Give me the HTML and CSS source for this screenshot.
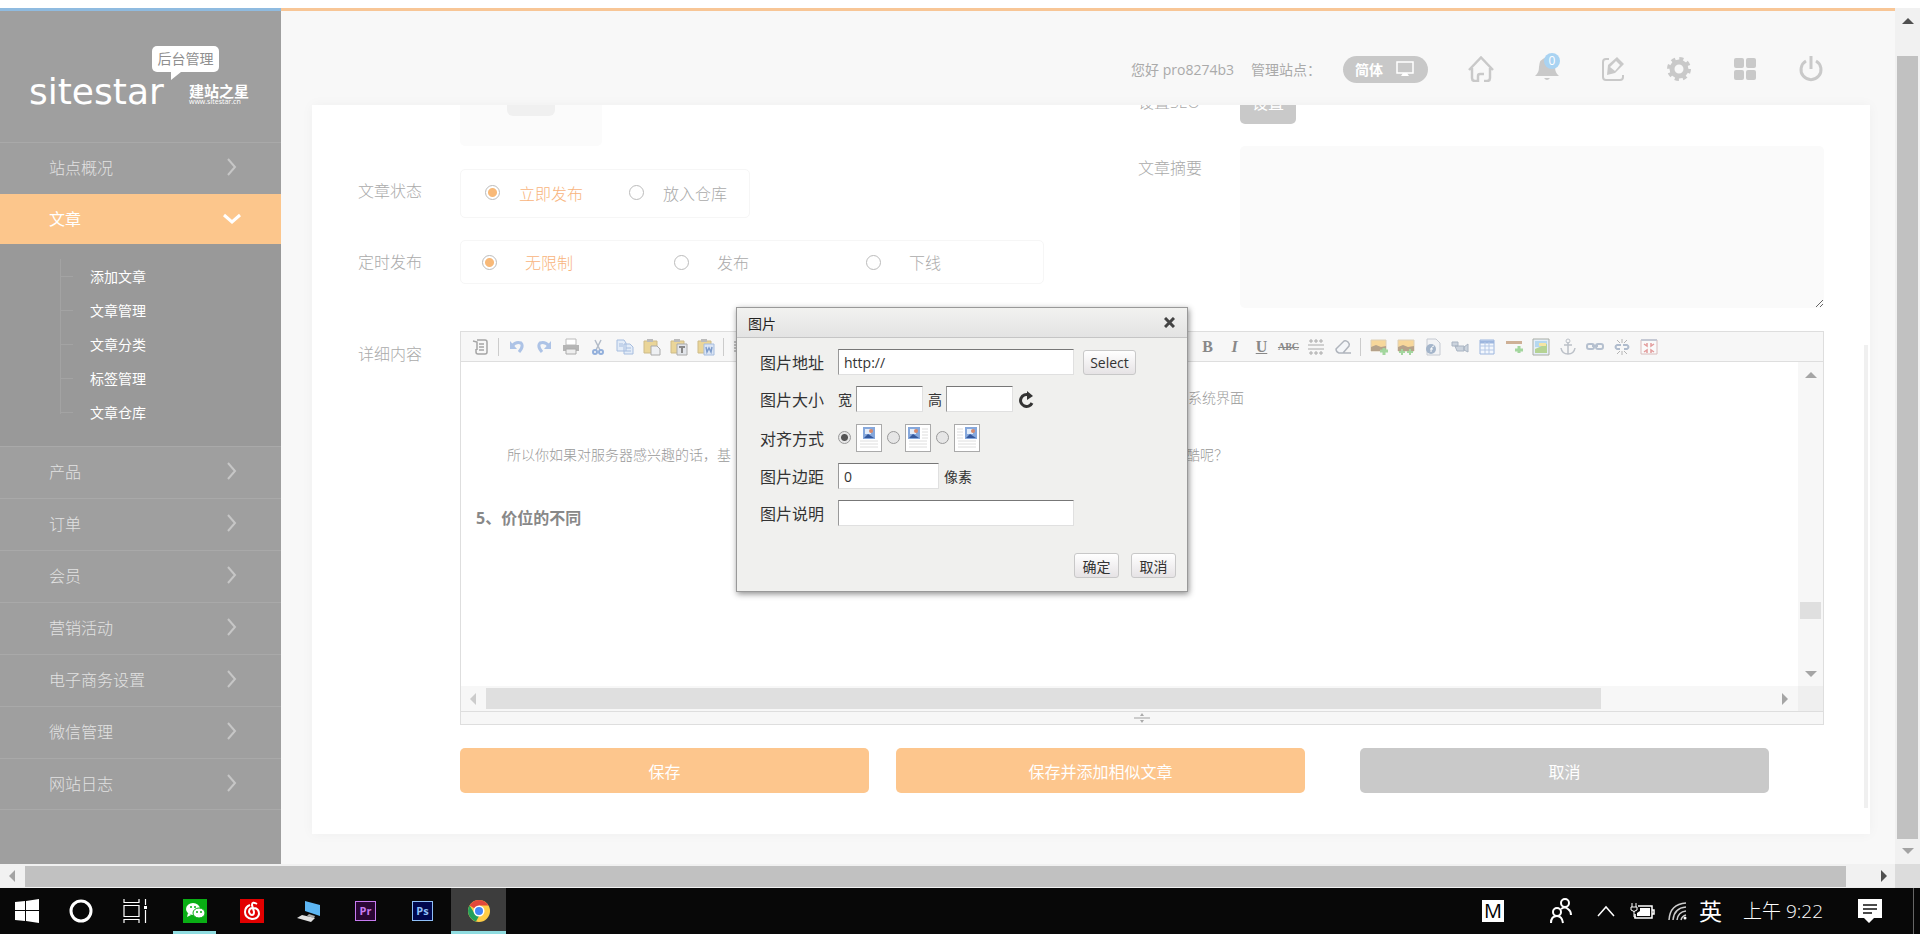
FILE: index.html
```html
<!DOCTYPE html>
<html lang="zh-CN">
<head>
<meta charset="utf-8">
<title>建站之星 后台管理</title>
<link rel="stylesheet" href="styles.css">
</head>
<body>
<div class="browser">
  <div class="viewport">
    <aside class="sidebar">
      <div class="logo">
        <span class="bubble">后台管理</span>
        <div class="brand"><span class="brand-name">sitestar</span><span class="brand-sub"><b>建站之星</b><small>www.sitestar.cn</small></span></div>
      </div>
      <nav>
        <a class="nav-item" href="#">站点概况<svg class="arrow" viewBox="0 0 18 18"><path d="M5 1l7 8-7 8"/></svg></a>
        <a class="nav-item active" href="#">文章<svg class="arrow" viewBox="0 0 18 18"><path d="M1 6l8 7 8-7"/></svg></a>
        <div class="submenu">
          <ul>
            <li><a href="#">添加文章</a></li>
            <li><a href="#">文章管理</a></li>
            <li><a href="#">文章分类</a></li>
            <li><a href="#">标签管理</a></li>
            <li><a href="#">文章仓库</a></li>
          </ul>
        </div>
        <a class="nav-item" href="#">产品<svg class="arrow" viewBox="0 0 18 18"><path d="M5 1l7 8-7 8"/></svg></a>
        <a class="nav-item" href="#">订单<svg class="arrow" viewBox="0 0 18 18"><path d="M5 1l7 8-7 8"/></svg></a>
        <a class="nav-item" href="#">会员<svg class="arrow" viewBox="0 0 18 18"><path d="M5 1l7 8-7 8"/></svg></a>
        <a class="nav-item" href="#">营销活动<svg class="arrow" viewBox="0 0 18 18"><path d="M5 1l7 8-7 8"/></svg></a>
        <a class="nav-item" href="#">电子商务设置<svg class="arrow" viewBox="0 0 18 18"><path d="M5 1l7 8-7 8"/></svg></a>
        <a class="nav-item" href="#">微信管理<svg class="arrow" viewBox="0 0 18 18"><path d="M5 1l7 8-7 8"/></svg></a>
        <a class="nav-item last" href="#">网站日志<svg class="arrow" viewBox="0 0 18 18"><path d="M5 1l7 8-7 8"/></svg></a>
      </nav>
    </aside>
    <main class="main">
      <header class="topbar">
        <span class="hello">您好 pro8274b3</span>
        <span class="site">管理站点：</span>
        <button class="lang" type="button">简体<svg width="18" height="16" viewBox="0 0 18 16"><path d="M1 1h16v11H1z" fill="none" stroke="#fff" stroke-width="1.500"/><path d="M7 12h4l2 3H5z" fill="#fff"/></svg></button>
        <div class="tools">
          <a href="#" aria-label="首页"><svg viewBox="0 0 26 26"><path d="M1 14L13 1.500 25 14M4 12v10q0 3 3 3h3v-5q0-2 2-2h4M22 12v10q0 3-3 3h-3" fill="none" stroke="#c9c9c9" stroke-width="2.500"/></svg></a>
          <a href="#" aria-label="消息"><svg viewBox="0 0 26 26"><path d="M13 1q8 2 8 10 0 6 4 9H1q4-3 4-9 0-8 8-10zM10 22h6q-3 4-6 0z" fill="#c9c9c9"/></svg><span class="badge">0</span></a>
          <a href="#" aria-label="编辑"><svg viewBox="0 0 26 26"><path d="M9 3H6Q3 3 3 6v15q0 3 3 3h14q3 0 3-3v-2" fill="none" stroke="#c9c9c9" stroke-width="2"/><path d="M7 19l1-10 9-8 7 7-9 9zM16 5l4 4-5 6-5-4z" fill="#c9c9c9" fill-rule="evenodd"/></svg></a>
          <a href="#" aria-label="设置"><svg viewBox="0 0 26 26"><circle cx="13" cy="13" r="7" fill="none" stroke="#c9c9c9" stroke-width="5"/><circle cx="13" cy="13" r="10" fill="none" stroke="#c9c9c9" stroke-width="4" stroke-dasharray="4 3.850"/></svg></a>
          <a href="#" aria-label="应用"><svg viewBox="0 0 26 26"><g fill="#c9c9c9"><rect x="2" y="2" width="10" height="10" rx="2"/><rect x="14" y="2" width="10" height="10" rx="2"/><rect x="2" y="14" width="10" height="10" rx="2"/><rect x="14" y="14" width="10" height="10" rx="2"/></g></svg></a>
          <a href="#" aria-label="退出"><svg viewBox="0 0 26 26"><path d="M8 5a10 10 0 1 0 10 0M13 0v13" fill="none" stroke="#c9c9c9" stroke-width="3"/></svg></a>
        </div>
      </header>
      <form class="panel">
        <div class="fields">
          <div class="col">
            <div class="row"><span class="label"></span><div class="upload"><i></i></div></div>
            <div class="row status-row"><span class="label">文章状态</span>
              <div class="options status">
                <label class="on"><input type="radio" name="status" checked>立即发布</label>
                <label><input type="radio" name="status">放入仓库</label>
              </div>
            </div>
            <div class="row timing-row"><span class="label">定时发布</span>
              <div class="options timing">
                <label class="on"><input type="radio" name="timing" checked>无限制</label>
                <label><input type="radio" name="timing">发布</label>
                <label><input type="radio" name="timing">下线</label>
              </div>
            </div>
          </div>
          <div class="col">
            <div class="row seo"><span class="label">设置SEO</span><button type="button" class="seo-btn">设置</button></div>
            <div class="row"><label class="label" for="summary">文章摘要</label><textarea id="summary"></textarea></div>
          </div>
        </div>
        <div class="row content-row">
          <span class="label content-label">详细内容</span>
          <div class="editor">
            <div class="toolbar">
              <button type="button" aria-label="源代码"><svg viewBox="0 0 18 18"><path d="M5 2h8q2 0 2 2v10q0 2-2 2H6q-2 0-2-2v-3M1 3l4 1v8M7 6h5M7 9h5M7 12h5" fill="none" stroke="#a5a5a5" stroke-width="1.500"/></svg></button>
              <i class="sep"></i>
              <button type="button" aria-label="撤销"><svg viewBox="0 0 18 18"><path d="M4 8q4-5 9-3 3 3-2 9" fill="none" stroke="#adc3e6" stroke-width="3"/><path d="M2 3v8h7z" fill="#adc3e6"/></svg></button>
              <button type="button" aria-label="重做"><svg viewBox="0 0 18 18"><path d="M14 8Q10 3 5 5q-3 3 2 9" fill="none" stroke="#adc3e6" stroke-width="3"/><path d="M16 3v8H9z" fill="#adc3e6"/></svg></button>
              <button type="button" aria-label="打印"><svg viewBox="0 0 18 18"><path d="M4 1h10v6H4z" fill="#fff" stroke="#bbb"/><path d="M1 7h16v6H1z" fill="#b5b5b5"/><path d="M4 11h10v5H4z" fill="#eee" stroke="#aaa"/></svg></button>
              <button type="button" aria-label="剪切"><svg viewBox="0 0 18 18"><path d="M6 2l5 10M12 2L7 12" stroke="#b3bcc9" stroke-width="1.500"/><circle cx="6" cy="14" r="2" fill="none" stroke="#92afdb" stroke-width="2"/><circle cx="12" cy="14" r="2" fill="none" stroke="#92afdb" stroke-width="2"/></svg></button>
              <button type="button" aria-label="复制"><svg viewBox="0 0 18 18"><path d="M1 2h7l2 3v8H1zM8 6h6l3 3v7H8z" fill="#e3ecf8" stroke="#a6bddf"/><path d="M3 6h4M3 8h4M10 10h5M10 13h5" stroke="#a6bddf"/></svg></button>
              <button type="button" aria-label="粘贴"><svg viewBox="0 0 18 18"><path d="M1 3h13v12H1z" fill="#ead598" stroke="#cdbb89"/><path d="M4 1h6v3H4z" fill="#bbb"/><path d="M8 8h6l3 3v6H8z" fill="#eef0f3" stroke="#aaa"/></svg></button>
              <button type="button" aria-label="粘贴为文本"><svg viewBox="0 0 18 18"><path d="M1 3h13v12H1z" fill="#ead598" stroke="#cdbb89"/><path d="M4 1h6v3H4z" fill="#bbb"/><path d="M7 6h10v11H7z" fill="#e2e5ea" stroke="#aaa"/><path d="M9 9h6M12 9v6" stroke="#888" stroke-width="2"/></svg></button>
              <button type="button" aria-label="从Word粘贴"><svg viewBox="0 0 18 18"><path d="M1 3h13v12H1z" fill="#ead598" stroke="#cdbb89"/><path d="M4 1h6v3H4z" fill="#bbb"/><path d="M7 6h10v11H7z" fill="#dbe5f4" stroke="#a6bddf"/><path d="M9 9l1 5 2-4 2 4 1-5" fill="none" stroke="#7f9dcc" stroke-width="1.500"/></svg></button>
              <i class="sep"></i>
              <button type="button" aria-label="左对齐"><svg viewBox="0 0 18 18"><path d="M1 4h14M1 7h10M1 10h14M1 13h10" stroke="#8a8a8a"/></svg></button>
              <span class="gap"></span>
              <button type="button" class="txt"><b>B</b></button>
              <button type="button" class="txt"><em>I</em></button>
              <button type="button" class="txt"><u>U</u></button>
              <button type="button" class="txt tiny"><s>ABC</s></button>
              <button type="button" aria-label="行距"><svg viewBox="0 0 18 18"><path d="M1 7h16M1 11h16M4 1v4M9 1v4M14 1v4M4 13v4M9 13v4M14 13v4M2 3h4M7 3h4M12 3h4M2 15h4M7 15h4M12 15h4" stroke="#aaa"/></svg></button>
              <button type="button" aria-label="清除格式"><svg viewBox="0 0 18 18"><path d="M2 11l8-8q2-1 4 1t1 4l-6 7H5q-3-1-3-4zM8 15h9" fill="#f4f6f9" stroke="#b0b5bd" stroke-width="1.500"/></svg></button>
              <i class="sep"></i>
              <button type="button" aria-label="图片"><svg viewBox="0 0 18 18"><path d="M1 2h15v11H1z" fill="#f7d79a" stroke="#ddd0b8"/><path d="M1 9l5-2 5 2 5-1v5H1z" fill="#b5a28a"/><path d="M14 10v7M10 13h8" stroke="#a3d69e" stroke-width="3"/></svg></button>
              <button type="button" aria-label="批量图片"><svg viewBox="0 0 18 18"><path d="M1 2h16v11H1z" fill="#f7d79a" stroke="#ddd0b8"/><path d="M1 9l5-2 5 2 6-1v5H1z" fill="#b5a28a"/><path d="M5 11v6M2 14h6M13 11v6M10 14h6" stroke="#a3d69e" stroke-width="2"/></svg></button>
              <button type="button" aria-label="Flash"><svg viewBox="0 0 18 18"><path d="M3 1h9l4 4v12H3z" fill="#f2f3f5" stroke="#c5cad2"/><circle cx="7" cy="11" r="5" fill="#a4b5ca"/><path d="M10 8q-3 0-3 6M6 11h3" stroke="#fff" fill="none"/></svg></button>
              <button type="button" aria-label="视频"><svg viewBox="0 0 18 18"><path d="M1 4h6v4H1zM4 8h9v5H6zM13 9l4-3v8l-4-2z" fill="#cbd3dd" stroke="#a9b4c2"/></svg></button>
              <button type="button" aria-label="表格"><svg viewBox="0 0 18 18"><path d="M2 2h14v14H2z" fill="#f3f7fd" stroke="#9db6de"/><path d="M2 4h14" stroke="#9db6de" stroke-width="3"/><path d="M2 8h14M2 12h14M7 4v12M11 4v12" stroke="#b5c8e6"/></svg></button>
              <button type="button" aria-label="横线"><svg viewBox="0 0 18 18"><path d="M1 3h16v3H1z" fill="#ceb096"/><path d="M14 8v7M10 12h8" stroke="#a3d69e" stroke-width="3"/></svg></button>
              <button type="button" aria-label="地图"><svg viewBox="0 0 18 18"><path d="M1 1h16v16H1z" fill="#e5eef8" stroke="#a9ada5"/><path d="M3 3h12v6H3z" fill="#b5d8f0"/><path d="M3 11l7-3 5-2v9H3z" fill="#b5d394"/><path d="M7 5h7v3H7z" fill="#f5e5a4"/></svg></button>
              <button type="button" aria-label="锚点"><svg viewBox="0 0 18 18"><path d="M9 4v12M5 7h8M2 10q1 6 7 6 6 0 7-6" fill="none" stroke="#bcc1c8" stroke-width="1.500"/><circle cx="9" cy="3" r="2" fill="none" stroke="#bcc1c8"/></svg></button>
              <button type="button" aria-label="链接"><svg viewBox="0 0 18 18"><rect x="1" y="6" width="7" height="5" rx="2" fill="none" stroke="#b5c0cf" stroke-width="2"/><rect x="10" y="6" width="7" height="5" rx="2" fill="none" stroke="#b5c0cf" stroke-width="2"/><path d="M6 8h6" stroke="#b5c0cf" stroke-width="2"/></svg></button>
              <button type="button" aria-label="取消链接"><svg viewBox="0 0 18 18"><path d="M8 7H4q-3 2 0 4h3M10 7h4q3 2 0 4h-3" fill="none" stroke="#b0bccd" stroke-width="2"/><path d="M9 1v4M9 13v4M4 2l3 3M14 2l-3 3M4 16l3-3M14 16l-3-3" stroke="#b5b5b5"/></svg></button>
              <button type="button" aria-label="全屏"><svg viewBox="0 0 18 18"><path d="M1 2h16v14H1z" fill="#fafafa" stroke="#d9bcbc"/><path d="M1 2h16" stroke="#c5c9d4" stroke-width="2"/><path d="M4 6l3 2V5M14 6l-3 2V5M4 14l3-2v3M14 14l-3-2v3" fill="none" stroke="#e39c9c" stroke-width="1.500"/></svg></button>
            </div>
            <div class="edit-area">
              <div class="document">
                <p class="line-a">系统界面</p>
                <p class="line-b"><span>所以你如果对服务器感兴趣的话，基</span><span>酷呢？</span></p>
                <h4>5、价位的不同</h4>
              </div>
              <div class="vbar"><i class="tri up"></i><i class="thumb"></i><i class="tri down"></i></div>
              <div class="hbar"><i class="tri left"></i><i class="thumb"></i><i class="tri right"></i></div>
              <div class="corner"></div>
            </div>
            <div class="grip"><svg width="18" height="10" viewBox="0 0 18 10"><path d="M1 5h16" stroke="#ccc" stroke-width="2"/><path d="M7 3l2-3 2 3zM7 7l2 3 2-3z" fill="#aaa"/></svg></div>
          </div>
        </div>
        <div class="actions">
          <button type="button">保存</button>
          <button type="button">保存并添加相似文章</button>
          <button type="button" class="cancel">取消</button>
        </div>
        <i class="panel-bar"></i>
      </form>
    </main>
  </div>
  <div class="page-vbar"><i class="tri up"></i><i class="thumb"></i><i class="tri down"></i></div>
  <div class="page-hbar"><i class="tri left"></i><i class="thumb"></i><i class="tri right"></i></div>
  <div class="page-corner"></div>

  <div class="dialog" role="dialog" aria-label="图片">
    <div class="dialog-head"><span>图片</span><button type="button" class="close" aria-label="关闭"><svg width="11" height="11" viewBox="0 0 11 11"><path d="M1 1l9 9M10 1l-9 9" stroke="#444" stroke-width="3"/></svg></button></div>
    <div class="dialog-body">
      <div class="drow"><label class="dlabel" for="url">图片地址</label><input id="url" class="wide" type="text" value="http://"><button type="button" class="dbtn select">Select</button></div>
      <div class="drow"><span class="dlabel">图片大小</span><label for="w">宽</label><input id="w" class="size" type="text"><label for="h">高</label><input id="h" class="size" type="text"><button type="button" class="refresh" aria-label="重置"><svg width="16" height="17" viewBox="0 0 16 17"><path d="M14 12a6 6 0 1 1-3-8" fill="none" stroke="#333" stroke-width="3"/><path d="M9 0l6 5-6 4z" fill="#333"/></svg></button></div>
      <div class="drow align"><span class="dlabel">对齐方式</span>
        <input type="radio" name="al" id="al1" checked><label for="al1" class="thumbnail"><svg width="24" height="26" viewBox="0 0 24 26"><path d="M3 16h18M3 19h18M3 22h18" stroke="#dedede"/><path d="M6 2h12v12H6z" fill="#86a8dc"/><path d="M8 4h6v5H8z" fill="#e3edfa"/><circle cx="14" cy="6" r="2" fill="#d98a6c"/><path d="M7 13l4-4 6 4z" fill="#35599d"/></svg></label>
        <input type="radio" name="al" id="al2"><label for="al2" class="thumbnail"><svg width="24" height="26" viewBox="0 0 24 26"><path d="M16 4h6M16 7h6M16 10h6M16 13h6M3 16h18M3 19h18M3 22h18" stroke="#dedede"/><path d="M2 2h12v12H2z" fill="#86a8dc"/><path d="M4 4h6v5H4z" fill="#e3edfa"/><circle cx="10" cy="6" r="2" fill="#d98a6c"/><path d="M3 13l4-4 6 4z" fill="#35599d"/></svg></label>
        <input type="radio" name="al" id="al3"><label for="al3" class="thumbnail"><svg width="24" height="26" viewBox="0 0 24 26"><path d="M2 4h6M2 7h6M2 10h6M2 13h6M3 16h18M3 19h18M3 22h18" stroke="#dedede"/><path d="M10 2h12v12H10z" fill="#86a8dc"/><path d="M12 4h6v5h-6z" fill="#e3edfa"/><circle cx="18" cy="6" r="2" fill="#d98a6c"/><path d="M11 13l4-4 6 4z" fill="#35599d"/></svg></label>
      </div>
      <div class="drow"><label class="dlabel" for="margin">图片边距</label><input id="margin" class="mid" type="text" value="0"><span>像素</span></div>
      <div class="drow"><label class="dlabel" for="alt">图片说明</label><input id="alt" class="wide" type="text"></div>
    </div>
    <div class="dialog-foot"><button type="button" class="dbtn">确定</button><button type="button" class="dbtn">取消</button></div>
  </div>
</div>

<footer class="taskbar">
  <div class="apps">
    <button type="button" aria-label="开始"><svg viewBox="0 0 24 24"><path d="M0 3l10-1v9H0zM11 2l13-2v11H11zM0 12h10v10L0 21zM11 12h13v12l-13-2z" fill="#fff"/></svg></button>
    <button type="button" aria-label="Cortana"><svg viewBox="0 0 24 24"><circle cx="12" cy="12" r="10" fill="none" stroke="#fff" stroke-width="3"/></svg></button>
    <button type="button" aria-label="任务视图"><svg viewBox="0 0 24 24"><path d="M1 6.500h15v11H1zM1 0v3.500h15V0M1 24v-3.500h15V24M22.500 0v6M22.500 11v13" fill="none" stroke="#fff" stroke-width="1.200"/><path d="M21 7h3v3h-3z" fill="#fff"/></svg></button>
    <button type="button" class="app running" aria-label="微信"><svg viewBox="0 0 24 24"><path d="M0 0h24v24H0z" fill="#09ae14"/><ellipse cx="10" cy="10" rx="7" ry="6" fill="#fff"/><path d="M5 14l-1 4 4-2z" fill="#fff"/><ellipse cx="16" cy="14" rx="6" ry="5" fill="#fff" stroke="#09ae14"/><g fill="#09ae14"><circle cx="8" cy="8" r="1"/><circle cx="12" cy="8" r="1"/><circle cx="14" cy="13" r="1"/><circle cx="18" cy="13" r="1"/></g></svg></button>
    <button type="button" class="app" aria-label="网易云音乐"><svg viewBox="0 0 24 24"><path d="M0 0h24v24H0z" fill="#e20000"/><path d="M17 5q-5-3-5 1l2 7q0 3-2 3t-3-3q0-4 4-4 6 0 6 6-1 5-7 5-7-1-7-7 0-5 5-7" fill="none" stroke="#fff" stroke-width="2"/></svg></button>
    <button type="button" class="app" aria-label="远程桌面"><svg viewBox="0 0 24 24"><path d="M8 2l15 4v11L8 12z" fill="#5db6f3"/><path d="M12 15l6 2-1 2-7-2z" fill="#aaa"/><path d="M5 16l13 3-4 4L0 19z" fill="#e1e1e1"/></svg></button>
    <button type="button" class="app" aria-label="Premiere"><span class="adobe pr">Pr</span></button>
    <button type="button" class="app" aria-label="Photoshop"><span class="adobe ps">Ps</span></button>
    <button type="button" class="app running current" aria-label="Chrome"><svg viewBox="0 0 24 24"><circle cx="12" cy="12" r="11" fill="#ffcd46"/><path d="M12 12L2.500 6.500A11 11 0 0 1 21.500 6.500H12z" fill="#e2493b"/><path d="M2.500 6.500L8 15l4 2-3 5.500A11 11 0 0 1 2.500 6.500z" fill="#22a05b"/><circle cx="12" cy="12" r="5.500" fill="#fff"/><circle cx="12" cy="12" r="4" fill="#4286f5"/></svg></button>
  </div>
  <div class="tray">
    <span class="ime">M</span>
    <svg class="people" width="24" height="26" viewBox="0 0 24 26"><g fill="none" stroke="#fff" stroke-width="2"><circle cx="8" cy="14" r="4"/><path d="M2 25q0-7 6-7 5 0 6 7"/><circle cx="16" cy="5" r="4"/><path d="M12 11q4-3 7 0 3 2 3 6"/></g></svg>
    <svg class="chev" width="18" height="12" viewBox="0 0 18 12"><path d="M1 11l8-9 8 9" fill="none" stroke="#fff" stroke-width="1.500"/></svg>
    <svg class="batt" width="25" height="18" viewBox="0 0 25 18"><path d="M8 4h14v12H5v-4M22 8h2v4h-2" fill="none" stroke="#fff" stroke-width="1.500"/><path d="M10 6h10v8H7v-3l3-2z" fill="#fff"/><path d="M2 1v4M6 1v4M1 5h6v3q-3 3-6 0zM4 9v6h2" stroke="#fff" fill="none"/></svg>
    <svg class="wifi" width="20" height="20" viewBox="0 0 20 20"><g fill="none" stroke="#ccc" stroke-width="1.500"><path d="M2 19Q3 3 19 2M6 19Q7 7 19 6M10 19q1-8 9-9M14 19q1-4 5-5"/></g><circle cx="18" cy="17" r="1.500" fill="#fff"/></svg>
    <span class="lang-ind">英</span>
    <time>上午 9:22</time>
    <svg class="note" width="24" height="25" viewBox="0 0 24 25"><path d="M0 0h24v19h-8l-5 5-5-5H0z" fill="#fff"/><path d="M5 6h14M5 10h14M5 14h9" stroke="#111" stroke-width="1.500"/></svg>
  </div>
</footer>
</body>
</html>
```
FILE: styles.css
```css
* { box-sizing: border-box; }
body {
  margin: 0;
  min-height: 100vh;
  display: flex;
  flex-direction: column;
  background: #fff;
  font-family: "Open Sans", "Noto Sans CJK SC", sans-serif;
  font-size: 14px;
  color: #aaa;
}
button, input, textarea { font: inherit; color: inherit; margin: 0; }
button { padding: 0; border: 0; background: none; }
a { color: inherit; text-decoration: none; }
p, h4, ul { margin: 0; padding: 0; list-style: none; }

.browser {
  position: relative;
  flex: 1;
  display: grid;
  grid-template-columns: 1fr 25px;
  grid-template-rows: 1fr 24px;
  padding-top: 8px;
}
.viewport { display: flex; background: #f8f8f8; min-width: 0; }

/* Sidebar */
.sidebar {
  width: 281px;
  flex: none;
  border-top: 3px solid #8fbbe0;
  background: #9f9f9f;
  color: #e2e2e2;
}
.logo { height: 131px; padding: 35px 0 0 29px; color: #fff; }
.bubble {
  position: relative;
  display: block;
  width: 67px;
  height: 26px;
  margin-left: 123px;
  border-radius: 5px;
  background: #fff;
  color: #8f8f8f;
  font-size: 14px;
  line-height: 25px;
  text-align: center;
}
.bubble::after {
  content: "";
  position: absolute;
  left: 19px;
  top: 26px;
  border-top: 8px solid #fff;
  border-right: 10px solid transparent;
}
.brand { display: flex; align-items: flex-end; justify-content: space-between; width: 220px; height: 34px; }
.brand-name { font-family: "DejaVu Sans", sans-serif; font-size: 36px; line-height: 28px; }
.brand-sub { display: flex; flex-direction: column; width: 60px; }
.brand-sub b { font-size: 15px; line-height: 14px; }
.brand-sub small { font-size: 7px; line-height: 8px; }

.nav-item {
  display: flex;
  align-items: center;
  justify-content: space-between;
  height: 52px;
  padding: 0 40px 3px 49px;
  border-top: 1px solid #a9a9a9;
  font-size: 16px;
  font-weight: 300;
}
.nav-item.last { border-bottom: 1px solid #a9a9a9; }
.arrow { width: 18px; height: 18px; fill: none; stroke: #c6c6c6; stroke-width: 2; }
.nav-item.active { height: 50px; border: 0; background: #fcc68c; color: #fff; font-weight: 400; }
.nav-item.active .arrow { stroke: #fff; stroke-width: 3; }
.submenu { height: 202px; padding: 15px 0 0 60px; background: #999; color: #fff; }
.submenu ul { height: 155px; border-left: 1px solid #a3a3a3; }
.submenu li { display: flex; align-items: center; height: 34px; }
.submenu li::before { content: ""; width: 12px; margin-right: 17px; border-top: 1px solid #a3a3a3; }

/* Main */
.main {
  flex: 1;
  min-width: 0;
  display: flex;
  flex-direction: column;
  border-top: 3px solid #f8c696;
  padding: 0 25px 30px 31px;
}
.topbar { display: flex; align-items: center; justify-content: flex-end; height: 94px; padding: 22px 46px 0 0; flex: none; }
.hello { margin-right: 17px; }
.site { margin-right: 22px; }
.lang {
  display: flex;
  align-items: center;
  justify-content: space-between;
  width: 85px;
  height: 27px;
  padding: 0 14px 0 12px;
  margin-right: 40px;
  border-radius: 14px;
  background: #c8c8c8;
  color: #fff;
  font-weight: 700;
}
.tools { display: flex; gap: 40px; }
.tools a { position: relative; width: 26px; height: 26px; }
.tools svg { width: 26px; height: 26px; display: block; }
.badge {
  position: absolute;
  left: 10px;
  top: -3px;
  width: 16px;
  height: 16px;
  border-radius: 8px;
  background: #a9d3f2;
  color: #fff;
  font-size: 12px;
  line-height: 16px;
  text-align: center;
}

.panel {
  position: relative;
  flex: 1;
  display: flex;
  flex-direction: column;
  padding: 0 46px 41px;
  background: #fff;
  box-shadow: 0 0 12px rgba(0, 0, 0, .04);
  overflow: hidden;
}
.panel-bar { position: absolute; right: 2px; top: 240px; bottom: 26px; width: 4px; background: #f0f0f0; }
.fields { display: grid; grid-template-columns: minmax(0, 1fr) minmax(0, 1fr); column-gap: 94px; }
.row { display: flex; }
.label { width: 102px; flex: none; font-size: 16px; font-weight: 300; line-height: 44px; }
.upload { width: 142px; height: 41px; border-radius: 0 0 5px 5px; background: #fbfbfb; }
.upload i { display: block; width: 48px; height: 11px; margin: 0 auto; border-radius: 0 0 6px 6px; background: #f0f0f0; }
.status-row { margin-top: 23px; }
.timing-row { margin-top: 22px; }
.options { display: flex; align-items: center; border: 1px solid #f6f6f6; border-radius: 5px; font-size: 16px; font-weight: 300; }
.options label { display: flex; align-items: center; white-space: nowrap; }
.options .on { color: #f8b47c; }
.status { width: 290px; height: 49px; padding: 0 0 2px 24px; gap: 46px; }
.status label { gap: 19px; }
.timing { flex: 1; min-width: 0; height: 44px; padding-left: 21px; }
.timing label { flex: 0 1 192px; gap: 28px; }
.timing label:last-child { flex-basis: auto; }
input[type="radio"] {
  appearance: none;
  width: 15px;
  height: 15px;
  flex: none;
  border: 1px solid #bbb;
  border-radius: 50%;
  background: #fff;
}
.options input:checked { background: radial-gradient(circle, #f8b978 4px, #fff 5px); }
.seo { height: 19px; margin-bottom: 22px; align-items: flex-end; }
.seo .label { line-height: 43px; }
.seo-btn { width: 56px; height: 44px; border-radius: 5px; background: #c9c9c9; color: #fff; font-size: 16px; }
textarea { flex: 1; min-width: 0; height: 162px; border: 0; border-radius: 5px; background: #fafafa; }

.content-row { flex: 1; margin-top: 23px; }
.content-label { line-height: 46px; }
.editor { flex: 1; min-width: 0; display: flex; flex-direction: column; border: 1px solid #dedede; }
.toolbar { display: flex; align-items: center; height: 30px; padding-left: 6px; border-bottom: 1px solid #dedede; background: #f7f7f7; }
.toolbar button { width: 27px; height: 28px; flex: none; display: flex; align-items: center; justify-content: center; }
.toolbar svg { width: 18px; height: 18px; fill: none; }
.toolbar .sep { width: 1px; height: 18px; margin: 0 4px; flex: none; background: #ccc; }
.toolbar .gap { width: 439px; flex: none; }
.toolbar .txt { font-family: "Liberation Serif", serif; font-size: 16px; font-weight: 700; color: #888; }
.toolbar .tiny { font-size: 10px; }
.edit-area { flex: 1; display: grid; grid-template-columns: 1fr 25px; grid-template-rows: 1fr 25px; }
.document { padding: 24px 0 0 15px; color: #999; font-weight: 300; line-height: 24px; }
.line-a { width: 768px; text-align: right; }
.line-b { display: flex; justify-content: space-between; width: 752px; margin-top: 33px; padding-left: 31px; }
.document h4 { margin-top: 39px; font-size: 16px; font-weight: 700; color: #888; }
.vbar, .hbar, .page-vbar, .page-hbar { display: flex; align-items: center; }
.vbar, .page-vbar { flex-direction: column; }
.vbar, .hbar { background: #f7f7f7; color: #a5a5a5; }
.thumb { background: #dfdfdf; }
.vbar { padding: 10px 0 9px; }
.vbar .thumb { width: 21px; height: 17px; margin-top: auto; margin-bottom: 52px; }
.hbar { padding: 0 10px 0 9px; }
.hbar .thumb { height: 21px; flex: 1; margin: 0 181px 0 10px; }
.hbar .left { color: #ccc; }
.corner { background: #efefef; }
.tri { width: 0; height: 0; flex: none; border: 6px solid transparent; }
.tri.up { border-top: 0; border-bottom-color: currentColor; }
.tri.down { border-bottom: 0; border-top-color: currentColor; }
.tri.left { border-left: 0; border-right-color: currentColor; }
.tri.right { border-right: 0; border-left-color: currentColor; }
.grip { display: flex; align-items: center; justify-content: center; height: 13px; border-top: 1px solid #dedede; background: #f7f7f7; }

.actions { display: flex; gap: 27px; margin: 23px 55px 0 102px; }
.actions button { flex: 1; height: 45px; border-radius: 5px; background: #fdc68d; color: #fff; font-size: 16px; }
.actions .cancel { margin-left: 28px; background: #c9c9c9; }

/* Page scrollbars */
.page-vbar, .page-hbar { background: #f1f1f1; color: #505050; }
.page-vbar { padding: 10px 0; }
.page-vbar .thumb { width: 21px; flex: 1; margin: 32px 0 9px; background: #c1c1c1; }
.page-vbar .down, .page-hbar .left { color: #a3a3a3; }
.page-hbar { padding: 0 8px 0 9px; }
.page-hbar .thumb { height: 21px; flex: 1; margin: 0 35px 0 10px; background: #c1c1c1; }
.page-corner { background: #dcdcdc; }

/* Image dialog */
.dialog {
  position: absolute;
  left: calc(50% - 224px);
  top: 307px;
  width: 452px;
  border: 1px solid #999;
  background: #f0f0ee;
  box-shadow: 1px 2px 6px rgba(0, 0, 0, .45);
  color: #333;
}
.dialog-head {
  display: flex;
  align-items: center;
  justify-content: space-between;
  height: 30px;
  padding: 0 12px 0 11px;
  border-bottom: 1px solid #c5c5c5;
  background: linear-gradient(#f2f2f0, #e3e3e3);
  color: #222;
}
.close { display: flex; }
.dialog-body { display: flex; flex-direction: column; gap: 11px; padding: 11px 0 0 23px; }
.drow { display: flex; align-items: center; height: 26px; }
.drow.align { height: 29px; }
.dlabel { width: 78px; flex: none; font-size: 16px; }
.dialog input[type="text"] {
  height: 26px;
  padding: 0 5px;
  border: 1px solid #e0e0e0;
  border-top-color: #777;
  border-left-color: #999;
  background: #fff;
}
.dialog .wide { width: 236px; }
.dialog .size { width: 67px; margin: 0 5px 0 4px; }
.dialog .mid { width: 101px; margin-right: 5px; }
.refresh { display: flex; }
.dialog input[type="radio"] { width: 13px; height: 13px; border-color: #999; background: #e6e6e6; }
.dialog input[type="radio"]:checked { background: radial-gradient(circle, #555 3px, #e6e6e6 4px); }
.thumbnail { display: flex; width: 26px; height: 28px; margin: 0 5px; border: 1px solid #aaa; background: #fff; }
.dbtn {
  width: 45px;
  height: 25px;
  border: 1px solid #c8c8c8;
  border-radius: 3px;
  background: linear-gradient(#fff, #e6e3e5);
  color: #333;
}
.select { width: 53px; margin-left: 9px; }
.dialog-foot { display: flex; justify-content: flex-end; gap: 12px; padding: 27px 11px 13px 0; }

/* Taskbar */
.taskbar { display: flex; justify-content: space-between; height: 46px; background: #080808; color: #fff; }
.apps { display: flex; }
.apps button { width: 54px; display: flex; align-items: center; justify-content: center; }
.apps svg { width: 24px; height: 24px; }
.apps .app { width: 43px; margin: 0 7px; border: 0 solid #8fdce0; border-width: 0 0 3px; border-color: transparent; padding-top: 3px; }
.apps .app:nth-child(4) { margin-left: 11px; }
.apps .running { border-color: #8fdce0; }
.apps .current { width: 55px; margin: 0; background: #3d3d3d; }
.adobe { width: 21px; height: 20px; border: 1px solid; font-size: 11px; font-weight: 700; line-height: 18px; }
.pr { color: #c77af0; background: #2a0634; }
.ps { color: #8fc0f8; background: #00084e; }
.tray { display: flex; align-items: center; padding-right: 31px; border-right: 1px solid #666; margin-right: 6px; }
.ime { width: 22px; height: 22px; background: #fff; color: #000; font-size: 20px; line-height: 22px; text-align: center; margin-right: 45px; }
.people { margin-right: 24px; }
.chev { margin-right: 15px; }
.batt { margin-right: 12px; }
.wifi { margin-right: 12px; }
.lang-ind { margin-right: 21px; font-size: 23px; line-height: 46px; }
.tray time { margin-right: 35px; font-size: 19px; line-height: 46px; font-weight: 300; }
```
